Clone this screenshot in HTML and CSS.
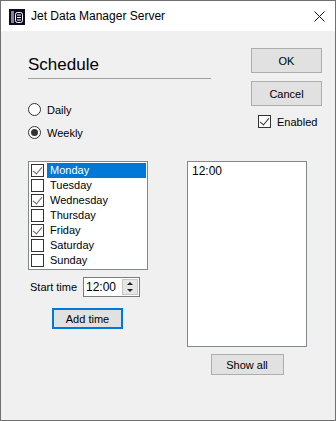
FILE: index.html
```html
<!DOCTYPE html>
<html lang="en">

<head>
    <meta charset="UTF-8">
    <meta name="viewport" content="width=device-width, initial-scale=1.0">
    <title>Jet Data Manager Server</title>
    <link rel="stylesheet" href="styles.css">
</head>

<body>
    <div class="window">
        <div class="titlebar">
            <svg class="app-icon" width="16" height="16" viewBox="0 0 16 16">
                <rect x="0" y="0" width="16" height="16" fill="#0b0b24"/>
                <path d="M2 3h3M2 5h3M2 7h3M2 9h3M2 11h3M2 13h3" stroke="#fff" stroke-width="1"/>
                <rect x="6.5" y="3.5" width="7" height="10" rx="2" fill="none" stroke="#fff" stroke-width="1"/>
                <path d="M8 6h4M8 8.5h4M8 11h4" stroke="#fff" stroke-width="1"/>
            </svg>
            <span class="title">Jet Data Manager Server</span>
            <svg class="close" width="11" height="11" viewBox="0 0 11 11">
                <path d="M0.5 0.5L10.5 10.5M10.5 0.5L0.5 10.5" stroke="#111" stroke-width="1"/>
            </svg>
        </div>

        <div class="content">
            <div class="top">
                <div class="top-left">
                    <h1 class="heading">Schedule</h1>
                    <div class="radios">
                        <label class="radio-row"><span class="radio"></span>Daily</label>
                        <label class="radio-row"><span class="radio checked"></span>Weekly</label>
                    </div>
                </div>
                <div class="top-right">
                    <button class="btn">OK</button>
                    <button class="btn">Cancel</button>
                    <label class="enabled"><span class="check on"></span>Enabled</label>
                </div>
            </div>

            <div class="bottom">
                <div class="left-col">
                    <ul class="day-list">
                        <li><span class="check on"></span><span class="day selected">Monday</span></li>
                        <li><span class="check"></span><span class="day">Tuesday</span></li>
                        <li><span class="check on"></span><span class="day">Wednesday</span></li>
                        <li><span class="check"></span><span class="day">Thursday</span></li>
                        <li><span class="check on"></span><span class="day">Friday</span></li>
                        <li><span class="check"></span><span class="day">Saturday</span></li>
                        <li><span class="check"></span><span class="day">Sunday</span></li>
                    </ul>
                    <div class="time-row">
                        <span class="time-label">Start time</span>
                        <div class="spin-box">
                            <span class="spin-value">12:00</span>
                            <div class="spinner">
                                <span class="arrow up"></span>
                                <span class="arrow down"></span>
                            </div>
                        </div>
                    </div>
                    <button class="btn add-btn">Add time</button>
                </div>
                <div class="right-col">
                    <ul class="time-list">
                        <li>12:00</li>
                    </ul>
                    <button class="btn show-btn">Show all</button>
                </div>
            </div>
        </div>
    </div>
</body>

</html>
```

FILE: styles.css
```css
* {
    box-sizing: border-box;
}

body {
    margin: 0;
    padding: 0;
    font-family: "Liberation Sans", Arial, sans-serif;
    font-size: 11px;
    color: #000;
    background-color: #f0f0f0;
}

.window {
    width: 336px;
    height: 421px;
    border: 1px solid #707070;
    background-color: #f0f0f0;
}

.titlebar {
    height: 30px;
    background-color: #fff;
    display: flex;
    align-items: center;
    padding-left: 8px;
    padding-right: 10px;
}

.app-icon {
    margin-top: 1px;
}

.title {
    margin-left: 6px;
    font-size: 12px;
    flex: 1;
}

.close {
    margin-top: 1px;
}

.content {
    padding: 17px 13px 0 27px;
}

/* top part */

.top {
    display: flex;
    justify-content: space-between;
}

.top-left {
    width: 183px;
}

.heading {
    margin: 7px 0 0 0;
    font-size: 17px;
    font-weight: normal;
    line-height: 20px;
    padding-bottom: 3px;
    border-bottom: 1px solid #a0a0a0;
}

.radios {
    margin-top: 24px;
    display: flex;
    flex-direction: column;
    gap: 10px;
}

.radio-row {
    display: flex;
    align-items: center;
    height: 13px;
}

.radio {
    width: 13px;
    height: 13px;
    border: 1px solid #333;
    border-radius: 50%;
    background-color: #fff;
    margin-right: 6px;
    display: flex;
    align-items: center;
    justify-content: center;
}

.radio.checked::after {
    content: "";
    width: 7px;
    height: 7px;
    border-radius: 50%;
    background-color: #333;
}

.top-right {
    width: 71px;
    display: flex;
    flex-direction: column;
}

.btn {
    font-family: "Liberation Sans", Arial, sans-serif;
    font-size: 11px;
    color: #000;
    background-color: #e1e1e1;
    border: 1px solid #adadad;
    padding: 0;
}

.top-right .btn {
    height: 25px;
    margin-bottom: 8px;
}

.enabled {
    display: flex;
    align-items: center;
    height: 13px;
    margin-top: 1px;
    margin-left: 7px;
}

.enabled .check {
    margin-right: 6px;
}

.check {
    width: 13px;
    height: 13px;
    border: 1px solid #333;
    background-color: #fff;
    position: relative;
    flex-shrink: 0;
}

.check.on::after {
    content: "";
    position: absolute;
    left: 3px;
    top: 0px;
    width: 4px;
    height: 8px;
    border-right: 1px solid #333;
    border-bottom: 1px solid #333;
    transform: rotate(40deg);
}

/* bottom part */

.bottom {
    display: flex;
    margin-top: 22px;
}

.left-col {
    width: 120px;
    display: flex;
    flex-direction: column;
}

.day-list {
    list-style: none;
    margin: 0;
    padding: 1px 1px 2px 2px;
    height: 109px;
    border: 1px solid #828790;
    background-color: #fff;
}

.day-list li {
    height: 15px;
    display: flex;
    align-items: center;
}

.day-list .check.on::after {
    border-color: #666;
}

.day {
    margin-left: 3px;
    padding: 0 3px;
    line-height: 15px;
    flex: 1;
}

.day.selected {
    background-color: #0078d7;
    color: #fff;
}

.time-row {
    display: flex;
    align-items: center;
    margin-top: 7px;
    padding-left: 2px;
}

.time-label {
    width: 53px;
}

.spin-box {
    width: 57px;
    height: 20px;
    border: 1px solid #7a7a7a;
    background-color: #fff;
    display: flex;
    align-items: center;
    justify-content: space-between;
    padding: 0 1px 0 2px;
}

.spin-value {
    font-size: 12px;
}

.spinner {
    width: 16px;
    height: 16px;
    border: 1px solid #c8c8c8;
    background-color: #e6e6e6;
    display: flex;
    flex-direction: column;
    align-items: center;
    justify-content: space-around;
}

.arrow {
    width: 0;
    height: 0;
    border-left: 3px solid transparent;
    border-right: 3px solid transparent;
}

.arrow.up {
    border-bottom: 3px solid #222;
}

.arrow.down {
    border-top: 3px solid #222;
}

.add-btn {
    width: 71px;
    height: 21px;
    margin-top: 11px;
    margin-left: 24px;
    border: 2px solid #0078d7;
}

.right-col {
    width: 120px;
    margin-left: 39px;
    display: flex;
    flex-direction: column;
    align-items: center;
}

.time-list {
    list-style: none;
    margin: 0;
    padding: 2px 4px;
    width: 120px;
    height: 186px;
    border: 1px solid #828790;
    background-color: #fff;
    font-size: 12px;
}

.show-btn {
    width: 73px;
    height: 21px;
    margin-top: 7px;
}
```
